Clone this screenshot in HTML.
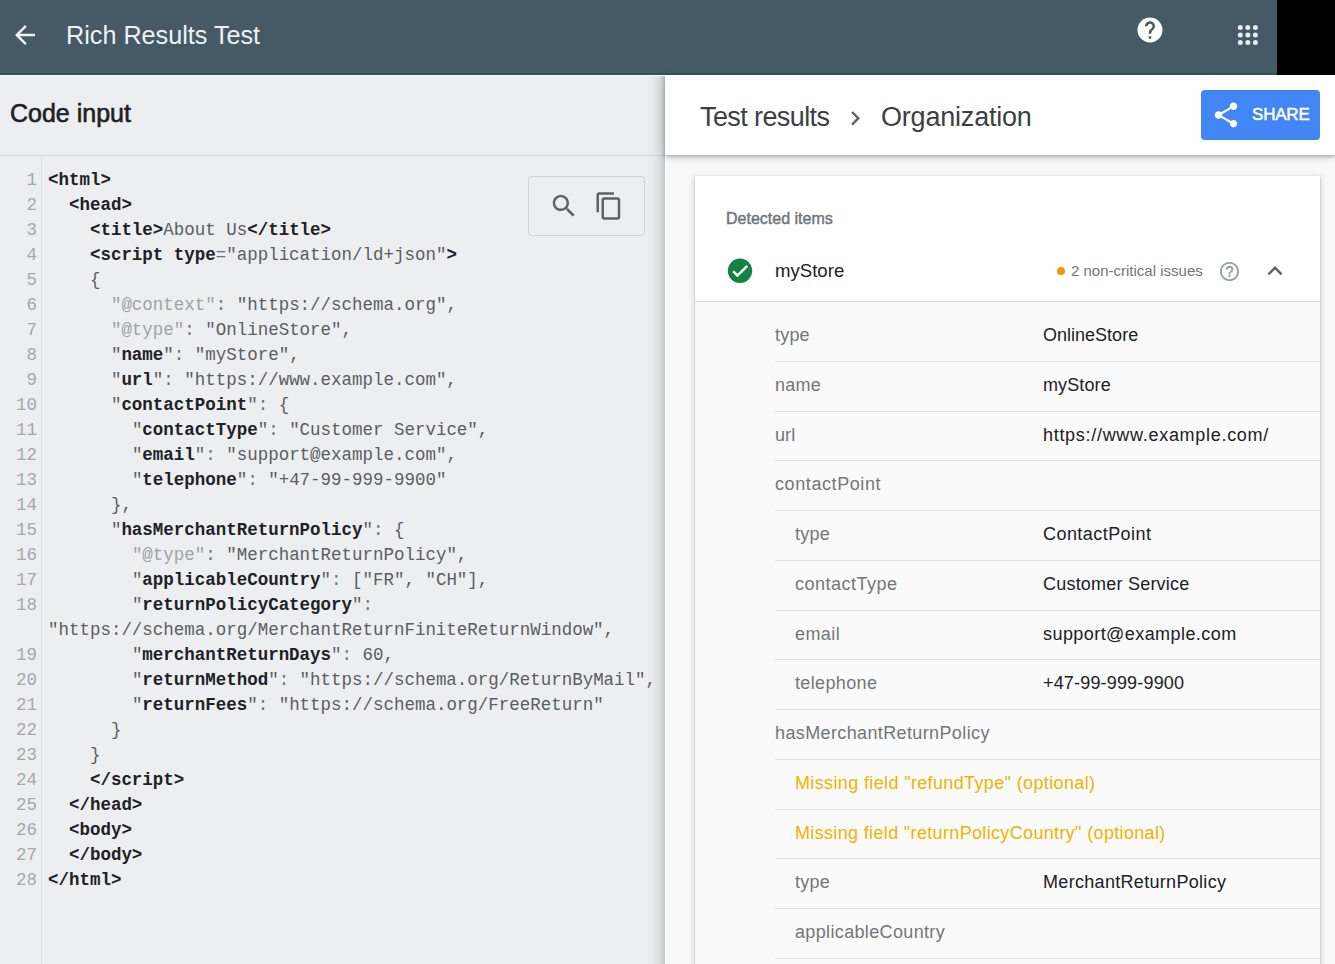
<!DOCTYPE html>
<html><head><meta charset="utf-8">
<style>
*{margin:0;padding:0;box-sizing:border-box}
html,body{width:1335px;height:964px;overflow:hidden;font-family:"Liberation Sans",sans-serif;background:#edeef0}
.abs{position:absolute}
#hdr{left:0;top:0;width:1335px;height:75px;background:#455a64}
#blk{left:1277px;top:0;width:58px;height:75px;background:#000}
#title{left:66px;top:18px;font-size:25.2px;color:#eef2f4;line-height:34px;white-space:nowrap}
#left{left:0;top:75px;width:665px;height:889px;background:#edeef0}
#codetitle{left:10px;top:97px;font-size:25px;font-weight:normal;-webkit-text-stroke:0.6px #202124;color:#202124;line-height:32px;white-space:nowrap}
#leftline{left:0;top:155px;width:665px;height:1px;background:#d5d8db}
#gutter{left:41px;top:156px;width:1px;height:808px;background:#dcdfe2}
#code{left:0;top:168px;font-family:"Liberation Mono",monospace;font-size:17.48px;line-height:25px;white-space:pre;color:#3c4043}
.ln{width:37px;text-align:right;color:#a4a8ac}
.cl{position:absolute;left:0;white-space:pre}
.cd{position:absolute;left:48px;white-space:pre}
.t{font-weight:bold;color:#202124}
.k{font-weight:bold;color:#202124}
.q{color:#80868b}
.g{color:#9ea2a6}
.c{color:#6f7377}
.s{color:#5a5e62}
#tools{left:528px;top:176px;width:117px;height:60px;border:1px solid #d2d4d6;border-radius:3px}
#right{left:665px;top:75px;width:670px;height:889px;background:#f9f9f9}
#lshadow{left:647px;top:76px;width:18px;height:888px;background:linear-gradient(to right,rgba(0,0,0,0) 0%,rgba(0,0,0,0.025) 35%,rgba(0,0,0,0.08) 70%,rgba(0,0,0,0.17) 100%)}
#rhead{left:665px;top:75px;width:670px;height:80px;background:#fff;box-shadow:0 2px 3px rgba(0,0,0,0.22),0 3px 10px rgba(0,0,0,0.12)}
.crumb{font-size:27px;color:#3c4043;line-height:34px;white-space:nowrap}
#share{left:1201px;top:90px;width:119px;height:50px;background:#4285f4;border-radius:4px}
#sharetxt{left:1252px;top:104.5px;font-size:17px;font-weight:normal;-webkit-text-stroke:0.5px #fff;color:#fff;letter-spacing:-0.2px;line-height:20px}
#card{left:695px;top:176px;width:625px;height:800px;background:#fff;box-shadow:0 1px 2px 0 rgba(0,0,0,.24),0 2px 6px 2px rgba(0,0,0,.1)}
#rows{left:695px;top:301px;width:625px;height:700px;background:#fafafa;border-top:1px solid #dcdcdc}
.rl{position:absolute;left:775px;width:545px;height:1px;background:#e0e0e0}
.lab{position:absolute;font-size:18px;color:#737679;white-space:nowrap;line-height:22px}
.val{position:absolute;left:1043px;font-size:18px;color:#202124;white-space:nowrap;line-height:22px}
.warn{position:absolute;left:795px;font-size:18px;color:#f0b300;white-space:nowrap;line-height:22px}
</style></head><body>
<div id="hdr" class="abs"></div>
<div class="abs" style="left:0;top:73px;width:1277px;height:2px;background:rgba(0,0,0,0.12)"></div>
<div id="blk" class="abs"></div>
<svg class="abs" style="left:10px;top:20px" width="30" height="30" viewBox="0 0 24 24"><path fill="#eef2f4" d="M20 11H7.83l5.59-5.59L12 4l-8 8 8 8 1.41-1.41L7.83 13H20v-2z"/></svg>
<div id="title" class="abs">Rich Results Test</div>
<!-- help icon -->
<svg class="abs" style="left:1135px;top:15px" width="30" height="30" viewBox="0 0 24 24"><circle cx="12" cy="12" r="10" fill="#fff"/><path fill="#455a64" d="M13 19h-2v-2h2v2zm2.07-7.75l-.9.92C13.45 12.9 13 13.5 13 15h-2v-.5c0-1.1.45-2.1 1.17-2.83l1.24-1.26c.37-.36.59-.86.59-1.41 0-1.1-.9-2-2-2s-2 .9-2 2H8c0-2.21 1.79-4 4-4s4 1.79 4 4c0 .88-.36 1.68-.93 2.25z"/></svg>
<!-- apps -->
<svg class="abs" style="left:0;top:0" width="1335" height="75"><g fill="#e6ecef"><circle cx="1240.3" cy="27.4" r="2.5"/><circle cx="1247.8" cy="27.4" r="2.5"/><circle cx="1255.4" cy="27.4" r="2.5"/><circle cx="1240.3" cy="35" r="2.5"/><circle cx="1247.8" cy="35" r="2.5"/><circle cx="1255.4" cy="35" r="2.5"/><circle cx="1240.3" cy="42.5" r="2.5"/><circle cx="1247.8" cy="42.5" r="2.5"/><circle cx="1255.4" cy="42.5" r="2.5"/></g></svg>

<div id="left" class="abs"></div>
<div id="codetitle" class="abs">Code input</div>
<div class="abs" style="left:0;top:75px;width:665px;height:1px;background:#f6f7f8"></div>
<div id="leftline" class="abs"></div>
<div id="gutter" class="abs"></div>
<div id="code" class="abs">
<div class="cl ln" style="top:0px">1</div>
<div class="cd" style="top:0px"><span class="t">&lt;html&gt;</span></div>
<div class="cl ln" style="top:25px">2</div>
<div class="cd" style="top:25px">  <span class="t">&lt;head&gt;</span></div>
<div class="cl ln" style="top:50px">3</div>
<div class="cd" style="top:50px">    <span class="t">&lt;title&gt;</span><span class="s">About Us</span><span class="t">&lt;/title&gt;</span></div>
<div class="cl ln" style="top:75px">4</div>
<div class="cd" style="top:75px">    <span class="t">&lt;script type</span><span class="c">=</span><span class="s">"application/ld+json"</span><span class="t">&gt;</span></div>
<div class="cl ln" style="top:100px">5</div>
<div class="cd" style="top:100px">    <span class="s">{</span></div>
<div class="cl ln" style="top:125px">6</div>
<div class="cd" style="top:125px">      <span class="g">"@context"</span><span class="c">: </span><span class="s">"https://schema.org",</span></div>
<div class="cl ln" style="top:150px">7</div>
<div class="cd" style="top:150px">      <span class="g">"@type"</span><span class="c">: </span><span class="s">"OnlineStore",</span></div>
<div class="cl ln" style="top:175px">8</div>
<div class="cd" style="top:175px">      <span class="s">"</span><span class="k">name</span><span class="s">"</span><span class="c">: </span><span class="s">"myStore",</span></div>
<div class="cl ln" style="top:200px">9</div>
<div class="cd" style="top:200px">      <span class="s">"</span><span class="k">url</span><span class="s">"</span><span class="c">: </span><span class="s">"https://www.example.com",</span></div>
<div class="cl ln" style="top:225px">10</div>
<div class="cd" style="top:225px">      <span class="s">"</span><span class="k">contactPoint</span><span class="s">"</span><span class="c">: </span><span class="s">{</span></div>
<div class="cl ln" style="top:250px">11</div>
<div class="cd" style="top:250px">        <span class="s">"</span><span class="k">contactType</span><span class="s">"</span><span class="c">: </span><span class="s">"Customer Service",</span></div>
<div class="cl ln" style="top:275px">12</div>
<div class="cd" style="top:275px">        <span class="s">"</span><span class="k">email</span><span class="s">"</span><span class="c">: </span><span class="s">"support@example.com",</span></div>
<div class="cl ln" style="top:300px">13</div>
<div class="cd" style="top:300px">        <span class="s">"</span><span class="k">telephone</span><span class="s">"</span><span class="c">: </span><span class="s">"+47-99-999-9900"</span></div>
<div class="cl ln" style="top:325px">14</div>
<div class="cd" style="top:325px">      <span class="s">},</span></div>
<div class="cl ln" style="top:350px">15</div>
<div class="cd" style="top:350px">      <span class="s">"</span><span class="k">hasMerchantReturnPolicy</span><span class="s">"</span><span class="c">: </span><span class="s">{</span></div>
<div class="cl ln" style="top:375px">16</div>
<div class="cd" style="top:375px">        <span class="g">"@type"</span><span class="c">: </span><span class="s">"MerchantReturnPolicy",</span></div>
<div class="cl ln" style="top:400px">17</div>
<div class="cd" style="top:400px">        <span class="s">"</span><span class="k">applicableCountry</span><span class="s">"</span><span class="c">: </span><span class="s">["FR", "CH"],</span></div>
<div class="cl ln" style="top:425px">18</div>
<div class="cd" style="top:425px">        <span class="s">"</span><span class="k">returnPolicyCategory</span><span class="s">"</span><span class="c">:</span></div>
<div class="cd" style="top:450px"><span class="s">"https://schema.org/MerchantReturnFiniteReturnWindow",</span></div>
<div class="cl ln" style="top:475px">19</div>
<div class="cd" style="top:475px">        <span class="s">"</span><span class="k">merchantReturnDays</span><span class="s">"</span><span class="c">: </span><span class="s">60,</span></div>
<div class="cl ln" style="top:500px">20</div>
<div class="cd" style="top:500px">        <span class="s">"</span><span class="k">returnMethod</span><span class="s">"</span><span class="c">: </span><span class="s">"https://schema.org/ReturnByMail",</span></div>
<div class="cl ln" style="top:525px">21</div>
<div class="cd" style="top:525px">        <span class="s">"</span><span class="k">returnFees</span><span class="s">"</span><span class="c">: </span><span class="s">"https://schema.org/FreeReturn"</span></div>
<div class="cl ln" style="top:550px">22</div>
<div class="cd" style="top:550px">      <span class="s">}</span></div>
<div class="cl ln" style="top:575px">23</div>
<div class="cd" style="top:575px">    <span class="s">}</span></div>
<div class="cl ln" style="top:600px">24</div>
<div class="cd" style="top:600px">    <span class="t">&lt;/script&gt;</span></div>
<div class="cl ln" style="top:625px">25</div>
<div class="cd" style="top:625px">  <span class="t">&lt;/head&gt;</span></div>
<div class="cl ln" style="top:650px">26</div>
<div class="cd" style="top:650px">  <span class="t">&lt;body&gt;</span></div>
<div class="cl ln" style="top:675px">27</div>
<div class="cd" style="top:675px">  <span class="t">&lt;/body&gt;</span></div>
<div class="cl ln" style="top:700px">28</div>
<div class="cd" style="top:700px"><span class="t">&lt;/html&gt;</span></div>
</div>
<div id="tools" class="abs"></div>
<svg class="abs" style="left:549px;top:191px" width="30" height="30" viewBox="0 0 24 24"><path fill="#616161" d="M15.5 14h-.79l-.28-.27C15.41 12.59 16 11.11 16 9.5 16 5.91 13.09 3 9.5 3S3 5.91 3 9.5 5.91 16 9.5 16c1.61 0 3.09-.59 4.23-1.57l.27.28v.79l5 4.99L20.49 19l-4.99-5zm-6 0C7.01 14 5 11.99 5 9.5S7.01 5 9.5 5 14 7.01 14 9.5 11.99 14 9.5 14z"/></svg>
<svg class="abs" style="left:594px;top:191px" width="30" height="30" viewBox="0 0 24 24"><path fill="#616161" d="M16 1H4c-1.1 0-2 .9-2 2v14h2V3h12V1zm3 4H8c-1.1 0-2 .9-2 2v14c0 1.1.9 2 2 2h11c1.1 0 2-.9 2-2V7c0-1.1-.9-2-2-2zm0 16H8V7h11v14z"/></svg>

<div id="lshadow" class="abs"></div>
<div id="right" class="abs"></div>
<div class="abs" style="left:665px;top:155px;width:1px;height:809px;background:#fff"></div>
<div id="rhead" class="abs"></div>
<div class="abs crumb" style="left:700px;top:100px;letter-spacing:-0.6px">Test results</div>
<svg class="abs" style="left:841px;top:103.7px" width="28.5" height="28.5" viewBox="0 0 24 24"><path fill="#616161" d="M10 6L8.59 7.41 13.17 12l-4.58 4.59L10 18l6-6z"/></svg>
<div class="abs crumb" style="left:881px;top:100px;letter-spacing:-0.2px">Organization</div>
<div id="share" class="abs"></div>
<svg class="abs" style="left:1211px;top:100px" width="30" height="30" viewBox="0 0 24 24"><path fill="#fff" d="M18 16.08c-.76 0-1.44.3-1.96.77L8.91 12.7c.05-.23.09-.46.09-.7s-.04-.47-.09-.7l7.05-4.11c.54.5 1.25.81 2.04.81 1.66 0 3-1.34 3-3s-1.34-3-3-3-3 1.34-3 3c0 .24.04.47.09.7L8.04 9.81C7.5 9.31 6.79 9 6 9c-1.66 0-3 1.34-3 3s1.34 3 3 3c.79 0 1.5-.31 2.04-.81l7.12 4.16c-.05.21-.08.43-.08.65 0 1.61 1.31 2.92 2.92 2.92 1.61 0 2.92-1.31 2.92-2.92s-1.31-2.92-2.92-2.92z"/></svg>
<div id="sharetxt" class="abs">SHARE</div>
<div id="card" class="abs"></div>
<div id="rows" class="abs"></div>
<div class="abs" style="left:726px;top:209px;font-size:16px;font-weight:normal;-webkit-text-stroke:0.45px #70757a;color:#70757a;line-height:20px;white-space:nowrap">Detected items</div>
<svg class="abs" style="left:725px;top:256px" width="30" height="30" viewBox="0 0 30 30"><circle cx="15" cy="14.8" r="12.2" fill="#138343"/><path d="M8.2 15.4L12.4 19.6L22.3 9.8" stroke="#fff" stroke-width="2.5" fill="none"/></svg>
<div class="abs" style="left:775px;top:259.5px;font-size:18.6px;color:#202124;line-height:22px;white-space:nowrap">myStore</div>
<div class="abs" style="left:1057px;top:267px;width:8px;height:8px;border-radius:50%;background:#f29900"></div>
<div class="abs" style="left:1071px;top:262px;font-size:15px;color:#737679;line-height:18px;white-space:nowrap">2 non-critical issues</div>
<svg class="abs" style="left:1217.6px;top:259.6px" width="23" height="23" viewBox="0 0 24 24"><path fill="#9aa0a6" d="M11 18h2v-2h-2v2zm1-16C6.48 2 2 6.48 2 12s4.48 10 10 10 10-4.48 10-10S17.52 2 12 2zm0 18c-4.41 0-8-3.59-8-8s3.59-8 8-8 8 3.59 8 8-3.59 8-8 8zm0-14c-2.21 0-4 1.79-4 4h2c0-1.1.9-2 2-2s2 .9 2 2c0 2-3 1.75-3 5h2c0-2.25 3-2.5 3-5 0-2.21-1.79-4-4-4z"/></svg>
<svg class="abs" style="left:1260px;top:256px" width="30" height="30" viewBox="0 0 24 24"><path fill="#5f6368" d="M12 8l-6 6 1.41 1.41L12 10.83l4.59 4.58L18 14z"/></svg>
<!--ROWS-->
<div class="lab" style="left:775px;top:324px;letter-spacing:0.2px">type</div>
<div class="val" style="top:324px;letter-spacing:0.01px">OnlineStore</div>
<div class="lab" style="left:775px;top:374px;letter-spacing:0.267px">name</div>
<div class="val" style="top:374px;letter-spacing:0.117px">myStore</div>
<div class="lab" style="left:775px;top:424px;letter-spacing:0.1px">url</div>
<div class="val" style="top:424px;letter-spacing:0.704px">https://www.example.com/</div>
<div class="lab" style="left:775px;top:473px;letter-spacing:0.591px">contactPoint</div>
<div class="lab" style="left:795px;top:523px;letter-spacing:0.267px">type</div>
<div class="val" style="top:523px;letter-spacing:0.445px">ContactPoint</div>
<div class="lab" style="left:795px;top:573px;letter-spacing:0.5px">contactType</div>
<div class="val" style="top:573px;letter-spacing:0.213px">Customer Service</div>
<div class="lab" style="left:795px;top:623px;letter-spacing:0.425px">email</div>
<div class="val" style="top:623px;letter-spacing:0.433px">support@example.com</div>
<div class="lab" style="left:795px;top:672px;letter-spacing:0.363px">telephone</div>
<div class="val" style="top:672px;letter-spacing:0.171px">+47-99-999-9900</div>
<div class="lab" style="left:775px;top:722px;letter-spacing:0.377px">hasMerchantReturnPolicy</div>
<div class="warn" style="left:795px;top:772px;letter-spacing:0.364px">Missing field "refundType" (optional)</div>
<div class="warn" style="left:795px;top:822px;letter-spacing:0.342px">Missing field "returnPolicyCountry" (optional)</div>
<div class="lab" style="left:795px;top:871px;letter-spacing:0.267px">type</div>
<div class="val" style="top:871px;letter-spacing:0.311px">MerchantReturnPolicy</div>
<div class="lab" style="left:795px;top:921px;letter-spacing:0.35px">applicableCountry</div>
<div class="rl" style="top:361px"></div>
<div class="rl" style="top:411px"></div>
<div class="rl" style="top:460px"></div>
<div class="rl" style="top:510px"></div>
<div class="rl" style="top:560px"></div>
<div class="rl" style="top:610px"></div>
<div class="rl" style="top:659px"></div>
<div class="rl" style="top:709px"></div>
<div class="rl" style="top:759px"></div>
<div class="rl" style="top:809px"></div>
<div class="rl" style="top:858px"></div>
<div class="rl" style="top:908px"></div>
<div class="rl" style="top:958px"></div>
</body></html>
